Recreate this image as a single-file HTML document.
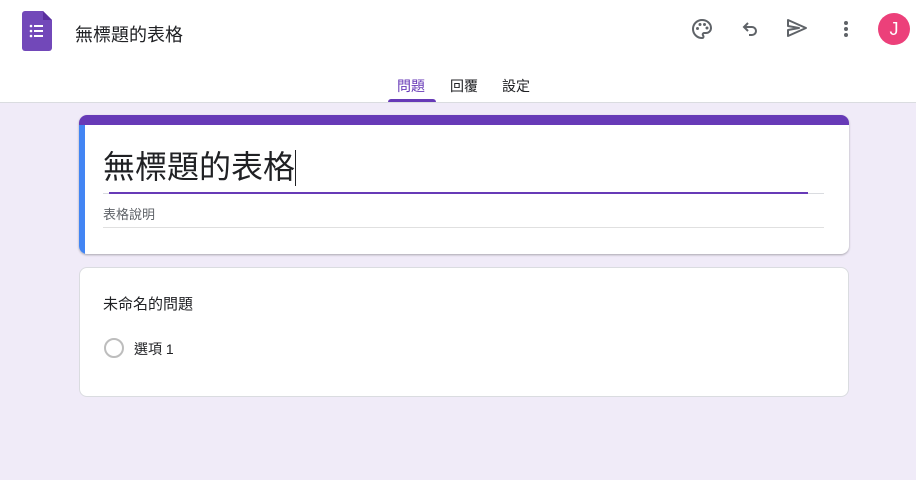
<!DOCTYPE html>
<html><head><meta charset="utf-8"><style>
*{margin:0;padding:0;box-sizing:border-box}
body{width:916px;height:480px;background:#f0ebf8;font-family:"Liberation Sans","Noto Sans CJK TC",sans-serif;position:relative;overflow:hidden;color:#202124}
.hdr{position:absolute;left:0;top:0;width:916px;height:103px;background:#fff;border-bottom:1px solid #dadce0}
.abs{position:absolute}
.card{position:absolute;background:#fff;border-radius:8px;border:1px solid #dadce0}
</style></head><body>
<div class="hdr">
 <svg class="abs" style="left:22px;top:11px" width="30" height="40" viewBox="0 0 30 40"><path d="M3 0h18l9 9v28a3 3 0 0 1-3 3H3a3 3 0 0 1-3-3V3a3 3 0 0 1 3-3z" fill="#7248b9"/><path d="M21 0l9 9h-9z" fill="#5a2f9e"/><g fill="#fff"><circle cx="9" cy="15" r="1.3"/><circle cx="9" cy="20" r="1.3"/><circle cx="9" cy="25" r="1.3"/><rect x="12" y="14" width="9" height="2"/><rect x="12" y="19" width="9" height="2"/><rect x="12" y="24" width="9" height="2"/></g></svg>
 <div class="abs" style="left:75px;top:21px;font-size:18px">無標題的表格</div>
 <svg class="abs" style="left:690px;top:17px" width="24" height="24" viewBox="0 0 24 24"><path d="M12 3a9 9 0 0 0 0 18c1 0 1.5-.7 1.5-1.5 0-.9-.8-1.2-.8-2 0-.8.7-1.5 1.5-1.5H16a5 5 0 0 0 5-5c0-4.4-4-8-9-8z" fill="none" stroke="#5f6368" stroke-width="2"/><g fill="#5f6368"><circle cx="7.5" cy="11.5" r="1.5"/><circle cx="10" cy="7.5" r="1.5"/><circle cx="14.5" cy="7.5" r="1.5"/><circle cx="17" cy="11" r="1.5"/></g></svg>
 <svg class="abs" style="left:739px;top:17px" width="24" height="24" viewBox="0 0 24 24"><path d="M9 6L5 10l4 4M5 10h8a4 4 0 0 1 0 8h-3" fill="none" stroke="#5f6368" stroke-width="2"/></svg>
 <svg class="abs" style="left:785px;top:16px" width="24" height="24" viewBox="0 0 24 24"><path d="M3 4l18 8-18 8v-6l11-2-11-2z" fill="none" stroke="#5f6368" stroke-width="2" stroke-linejoin="round"/></svg>
 <svg class="abs" style="left:834px;top:17px" width="24" height="24" viewBox="0 0 24 24"><g fill="#5f6368"><circle cx="12" cy="6" r="2"/><circle cx="12" cy="12" r="2"/><circle cx="12" cy="18" r="2"/></g></svg>
 <div class="abs" style="left:878px;top:13px;width:32px;height:32px;border-radius:50%;background:#ec407a;color:#fff;font-size:18px;text-align:center;line-height:32px">J</div>
 <div class="abs" style="left:397px;top:76px;font-size:14px;color:#673ab7">問題</div>
 <div class="abs" style="left:388px;top:99px;width:48px;height:3px;background:#673ab7;border-radius:3px 3px 0 0"></div>
 <div class="abs" style="left:450px;top:76px;font-size:14px">回覆</div>
 <div class="abs" style="left:502px;top:76px;font-size:14px">設定</div>
</div>
<div class="card" style="left:79px;top:115px;width:770px;height:139px;border:none;overflow:hidden;box-shadow:0 1px 2px rgba(0,0,0,.3)">
 <div class="abs" style="left:0;top:0;width:770px;height:10px;background:#673ab7"></div>
 <div class="abs" style="left:0;top:10px;width:6px;height:129px;background:#4285f4"></div>
 <div class="abs" style="left:24px;top:33px;font-size:32px;line-height:38px">無標題的表格<span style="display:inline-block;width:1px;height:36px;background:#202124;vertical-align:-8px"></span></div>
 <div class="abs" style="left:24px;top:78px;width:721px;height:1px;background:#dadce0"></div>
 <div class="abs" style="left:30px;top:77px;width:699px;height:2px;background:#673ab7"></div>
 <div class="abs" style="left:24px;top:89px;font-size:13px;color:#5f6368">表格說明</div>
 <div class="abs" style="left:24px;top:112px;width:721px;height:1px;background:#e0e0e0"></div>
</div>
<div class="card" style="left:79px;top:267px;width:770px;height:130px">
 <div class="abs" style="left:23px;top:25px;font-size:15px">未命名的問題</div>
 <div class="abs" style="left:24px;top:70px;width:20px;height:20px;border:2px solid #bdbdbd;border-radius:50%"></div>
 <div class="abs" style="left:54px;top:71px;font-size:14px">選項 1</div>
</div>
</body></html>
